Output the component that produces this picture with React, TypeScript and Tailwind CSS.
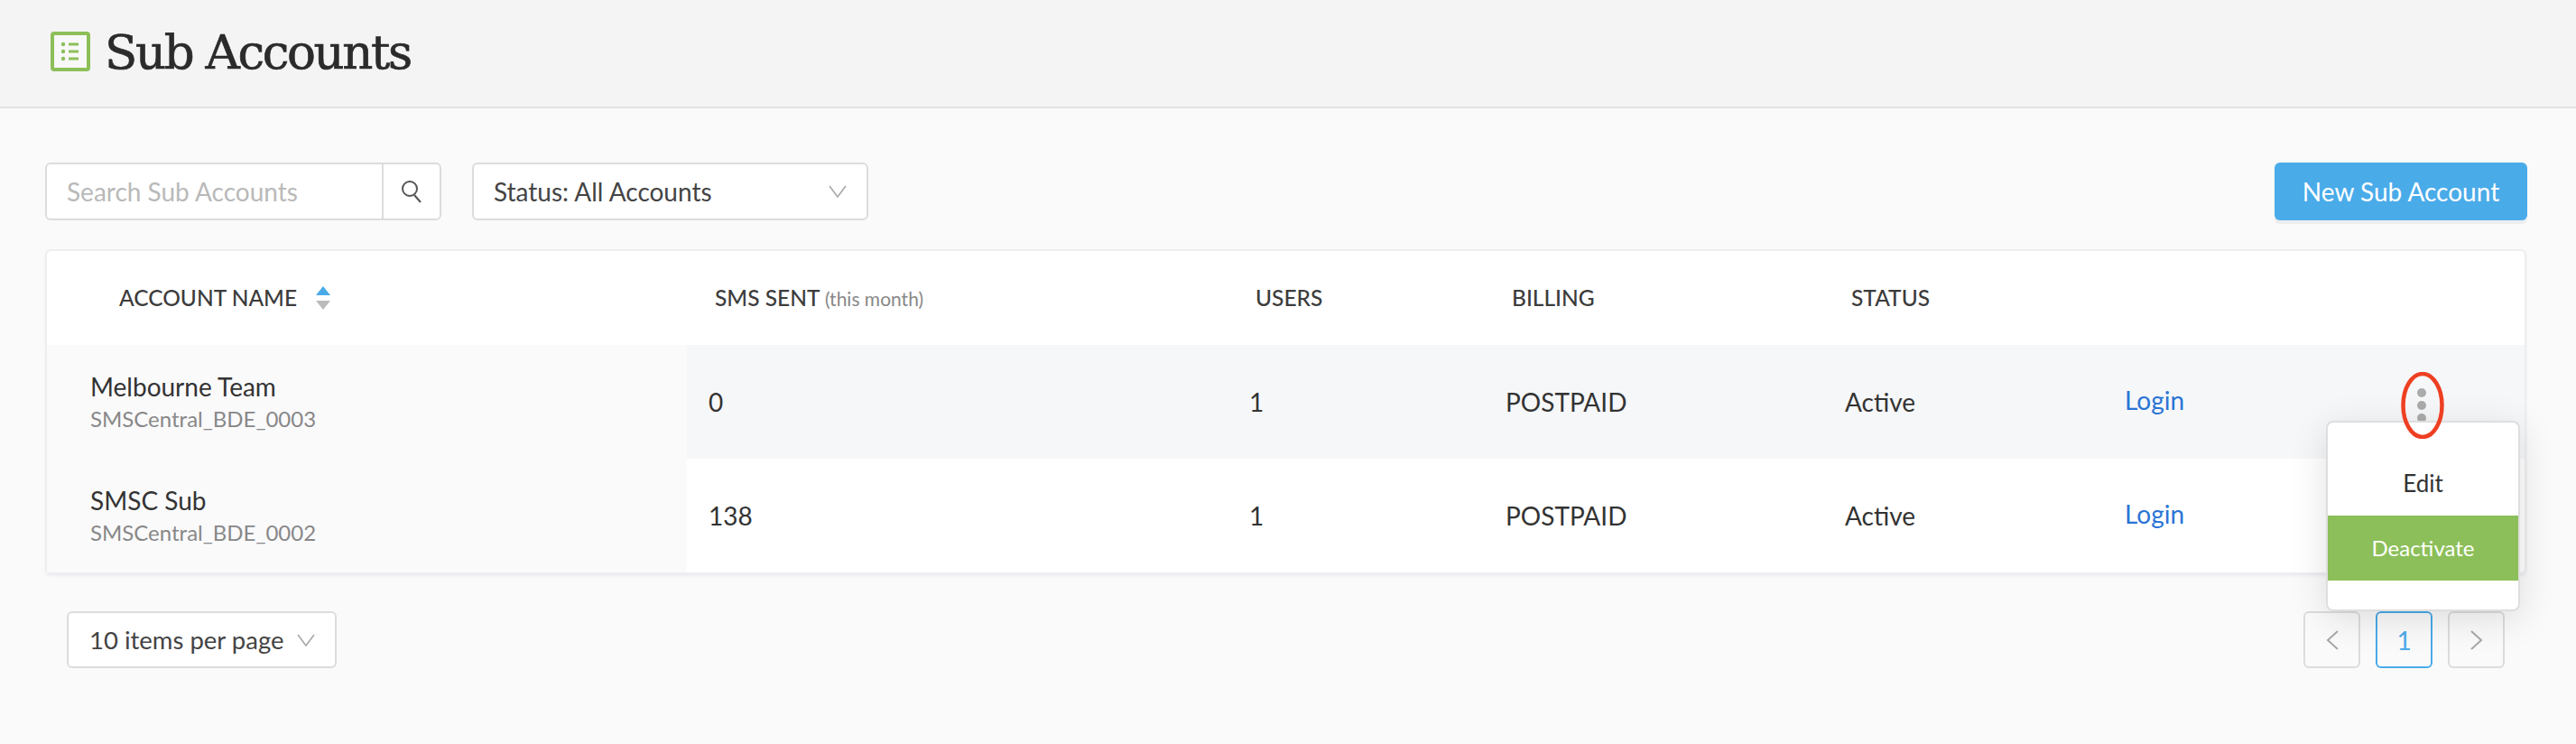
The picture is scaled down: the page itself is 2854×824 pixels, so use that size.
const columns = "grid grid-cols-[709px_623px_284px_376px_310px_1fr]";

const Chevron = ({ className }: { className: string }) => (
  <svg className={className} viewBox="0 0 20 14" fill="none" stroke="#a8a8a8" strokeWidth="1.6">
    <path d="M1 1 L10 13 L19 1" />
  </svg>
);

const rows = [
  { name: "Melbourne Team", id: "SMSCentral_BDE_0003", sent: "0", bg: "bg-[#f6f7f9]" },
  { name: "SMSC Sub", id: "SMSCentral_BDE_0002", sent: "138", bg: "bg-white" },
];

const App = () => {
  return (
    <div className="h-[824px] w-[2854px] overflow-hidden bg-[#fafafa] font-['Lato',sans-serif] text-[#333]">
      <header className="flex h-[120px] items-center gap-[16px] border-b-2 border-[#e3e3e3] bg-[#f4f4f4] pb-[4px] pl-[56px]">
        <svg className="h-[44px] w-[44px]" viewBox="0 0 44 44" fill="none">
          <rect x="2" y="2" width="40" height="40" rx="2" stroke="#8cbf59" strokeWidth="4" fill="#f8f8f8" />
          <circle cx="14" cy="14" r="2.2" fill="#8cbf59" />
          <circle cx="14" cy="22" r="2.2" fill="#8cbf59" />
          <circle cx="14" cy="30" r="2.2" fill="#8cbf59" />
          <path d="M20 14H31M20 22H31M20 30H31" stroke="#8cbf59" strokeWidth="3" />
        </svg>
        <h1 className="font-['DejaVu_Serif',serif] text-[53px] leading-none tracking-[-2.4px] text-[#2b2b2b] [-webkit-text-stroke:0.7px_#2b2b2b]">Sub Accounts</h1>
      </header>

      <main className="pl-[50px] pr-[54px] pt-[60px]">
        <div className="flex h-[68px] items-start">
          <div className="flex h-[64px] w-[439px] rounded-[6px] border-2 border-[#dcdcdc] bg-white">
            <div className="flex flex-1 items-center pl-[22px] text-[28px] text-[#b9b9b9]">Search Sub Accounts</div>
            <div className="flex w-[64px] items-center justify-center border-l-2 border-[#dcdcdc]">
              <svg className="h-[26px] w-[26px]" viewBox="0 0 26 26" fill="none" stroke="#555" strokeWidth="2">
                <circle cx="11" cy="10" r="8" />
                <path d="M16 17L23 25" />
              </svg>
            </div>
          </div>
          <div className="ml-[34px] flex h-[64px] w-[439px] items-center justify-between rounded-[6px] border-2 border-[#dcdcdc] bg-white pl-[22px] pr-[22px] text-[28px] text-[#444]">
            Status: All Accounts
            <Chevron className="h-[14px] w-[20px]" />
          </div>
          <button className="ml-auto h-[64px] w-[280px] rounded-[6px] bg-[#4aabe9] text-[28px] text-white shadow-[0_4px_0_#ededef]">New Sub Account</button>
        </div>

        <div className="relative mt-[28px] w-[2749px] rounded-[6px] border-2 border-[#eeeef2] shadow-[0_2px_3px_#ececf0]">
          <div className={`${columns} h-[104px] items-center rounded-t-[6px] bg-white text-[24.5px] font-medium text-[#3c3c3c]`}>
            <div className="flex items-center gap-[21px] pl-[80px]">
              ACCOUNT NAME
              <span className="flex flex-col gap-[6px]">
                <span className="h-0 w-0 border-x-[8px] border-b-[10px] border-x-transparent border-b-[#4aabe9]" />
                <span className="h-0 w-0 border-x-[8px] border-t-[10px] border-x-transparent border-t-[#bbbbbb]" />
              </span>
            </div>
            <div className="pl-[31px]">
              SMS SENT <span className="text-[21px] font-normal text-[#888]">(this month)</span>
            </div>
            <div className="pl-[7px]">USERS</div>
            <div className="pl-[7px]">BILLING</div>
            <div className="pl-[7px]">STATUS</div>
          </div>
          {rows.map((row, index) => (
            <div key={row.id} className={`${columns} h-[126px] items-center text-[28px] ${row.bg} ${index === 1 ? "rounded-b-[6px]" : ""}`}>
              <div className="flex h-full flex-col justify-center bg-[#fafafb] pl-[48px]">
                <div className="leading-[36px]">{row.name}</div>
                <div className="mt-[2px] text-[24px] leading-[32px] text-[#888]">{row.id}</div>
              </div>
              <div className="pl-[24px]">{row.sent}</div>
              <div>1</div>
              <div>POSTPAID</div>
              <div>Active</div>
              <div className="flex items-center">
                <a className="-mt-[4px] text-[#2a74d5]">Login</a>
                {index === 0 && (
                  <span className="ml-[258px] mt-[8px] flex flex-col gap-[4px]">
                    <span className="h-[10px] w-[10px] rounded-full bg-[#ababab]" />
                    <span className="h-[10px] w-[10px] rounded-full bg-[#ababab]" />
                    <span className="h-[10px] w-[10px] rounded-full bg-[#ababab]" />
                  </span>
                )}
              </div>
            </div>
          ))}

          <div className="absolute left-[2525px] top-[188px] flex h-[211px] w-[215px] flex-col overflow-hidden rounded-[8px] border-2 border-[#dedede] bg-white text-[24px] shadow-[0_8px_40px_rgba(0,0,0,0.12)]">
            <div className="flex h-[103px] items-center justify-center pt-[32px] text-[26px] text-[#333]">Edit</div>
            <div className="flex h-[72px] items-center justify-center bg-[#8cbf59] text-white">Deactivate</div>
          </div>
          <svg className="absolute left-[2608px] top-[134px] h-[74px] w-[48px]" viewBox="0 0 48 74" fill="none">
            <ellipse cx="24" cy="37" rx="21.5" ry="35" stroke="#ee3f22" strokeWidth="4.5" />
          </svg>
        </div>

        <div className="mt-[41px] flex h-[64px] items-start justify-between pl-[24px] pr-[25px]">
          <div className="flex h-[63px] w-[299px] items-center justify-between rounded-[6px] border-2 border-[#dcdcdc] bg-white pl-[23px] pr-[22px] text-[27.5px] text-[#444]">
            10 items per page
            <Chevron className="h-[14px] w-[20px]" />
          </div>
          <div className="flex gap-[17px]">
            <div className="flex h-[63px] w-[63px] items-center justify-center rounded-[6px] border-2 border-[#dcdcdc] bg-[#fafafa]">
              <svg className="h-[22px] w-[14px]" viewBox="0 0 14 22" fill="none" stroke="#a8a8a8" strokeWidth="2"><path d="M13 1L2 11L13 21" /></svg>
            </div>
            <div className="flex h-[63px] w-[63px] items-center justify-center rounded-[6px] border-2 border-[#4aabe9] bg-[#fafafa] text-[28px] text-[#4aabe9]">1</div>
            <div className="flex h-[63px] w-[63px] items-center justify-center rounded-[6px] border-2 border-[#dcdcdc] bg-[#fafafa]">
              <svg className="h-[22px] w-[14px]" viewBox="0 0 14 22" fill="none" stroke="#a8a8a8" strokeWidth="2"><path d="M1 1L12 11L1 21" /></svg>
            </div>
          </div>
        </div>
      </main>
    </div>
  );
};

export default App;
